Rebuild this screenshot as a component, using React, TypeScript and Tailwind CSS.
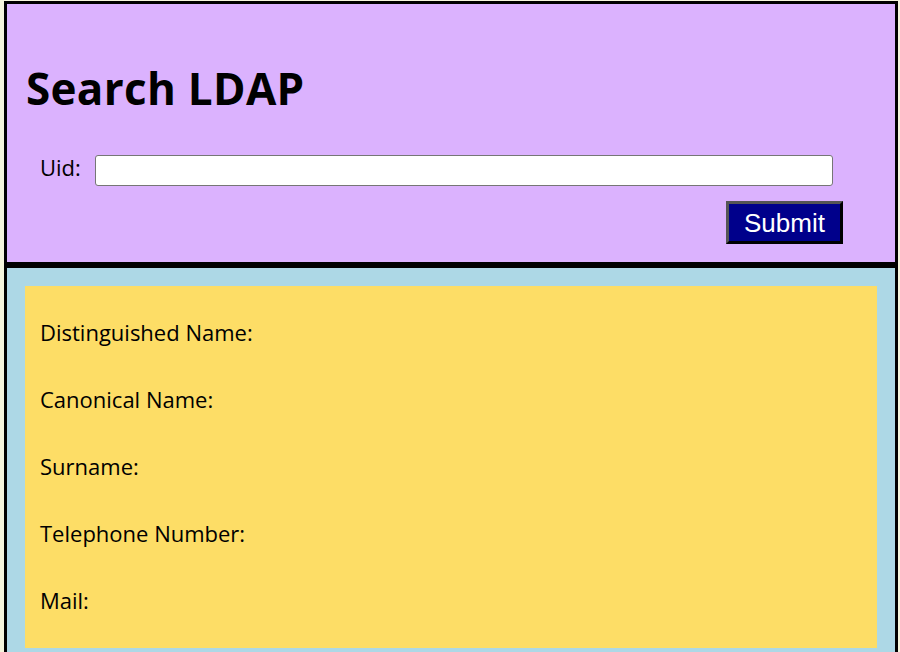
const FIELDS = ['Distinguished Name:', 'Canonical Name:', 'Surname:', 'Telephone Number:', 'Mail:']

export default function App() {
  return (
    <div className="min-h-screen bg-[#f5f5dc] pt-[1px] pl-[4px] pr-[2px] font-['Open_Sans',sans-serif] text-black">
      {/* Search form */}
      <header className="border-[3px] border-black bg-[#dbb2fe] pt-[60px] pb-[18px]">
        <h1 className="pl-[19px] text-[44px] font-bold leading-[48px] tracking-[0.3px]">Search LDAP</h1>
        <div className="mt-[43px] flex items-start pl-[33px] pr-[62px]">
          <label htmlFor="uid" className="text-[22px] leading-[25px]">Uid:</label>
          <input
            id="uid"
            type="text"
            className="ml-[14px] h-[31px] flex-1 rounded-[3px] border border-[#767676] bg-white px-2"
          />
        </div>
        <div className="mt-[15px] flex justify-end pr-[52px]">
          <button
            type="button"
            className="h-[43px] w-[117px] border-[3px] border-t-[#555555] border-l-[#555555] border-b-black border-r-black bg-[#00008b] font-['Liberation_Sans',Arial,sans-serif] text-[26px] leading-none text-white"
          >
            Submit
          </button>
        </div>
      </header>

      {/* Results */}
      <main className="border-[3px] border-black bg-[#add8e6] p-[18px]">
        <div className="bg-[#fddd66] px-[15px] pt-[32px] pb-[34px]">
          {FIELDS.map(f => (
            <p key={f} className="mb-[39px] text-[22px] leading-[28px] last:mb-0">{f}</p>
          ))}
        </div>
      </main>
    </div>
  )
}
